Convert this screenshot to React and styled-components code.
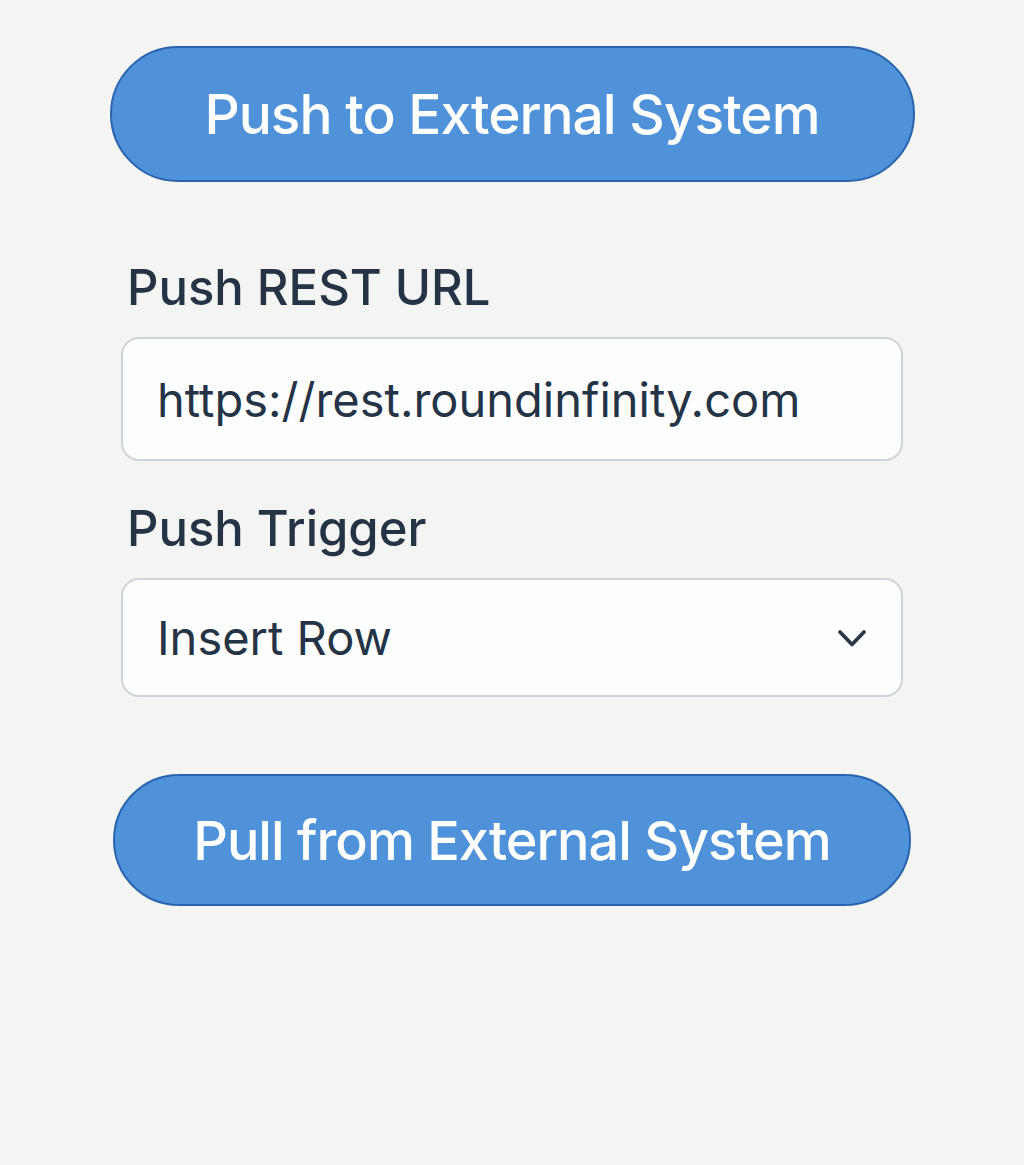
import React from 'react'
import styled, { createGlobalStyle } from 'styled-components'

const Global = createGlobalStyle`
  html, body {
    margin: 0;
    padding: 0;
    background: #f4f4f3;
  }
  body {
    font-family: Inter, "Noto Sans", sans-serif;
  }
`

const App = () => {
  return (
    <>
      <Global />
      <Page>
        <Panel>
          <PillButton $width={805}>Push to External System</PillButton>

          <Label $top={76}>Push REST URL</Label>
          <Field>https://rest.roundinfinity.com</Field>

          <Label $top={38}>Push Trigger</Label>
          <Select>
            <span>Insert Row</span>
            <Chevron viewBox="0 0 30 30">
              <path d="M3 9l12 12.5 12-12.5" />
            </Chevron>
          </Select>

          <PillButton $width={798} $top={77} $height={132} $size={54}>
            Pull from External System
          </PillButton>
        </Panel>
      </Page>
    </>
  )
}

export default App

const Page = styled.div`
  width: 100%;
  min-height: 1165px;
  display: flex;
  justify-content: center;
  padding-top: 46px;
  box-sizing: border-box;
`
const Panel = styled.div`
  width: 782px;
  display: flex;
  flex-direction: column;
  align-items: center;
`
const PillButton = styled.button`
  width: ${p => p.$width}px;
  height: ${p => p.$height || 136}px;
  margin-top: ${p => p.$top || 0}px;
  border-radius: 70px;
  border: 2px solid #2a63ae;
  background: #4f92da;
  color: #ffffff;
  font-family: Inter, "Noto Sans", sans-serif;
  font-size: ${p => p.$size || 55}px;
  font-weight: 500;
  letter-spacing: -1px;
  cursor: pointer;
  flex-shrink: 0;
`
const Label = styled.div`
  align-self: stretch;
  margin-top: ${p => p.$top}px;
  margin-bottom: 19px;
  padding-left: 6px;
  color: #243446;
  font-size: 49px;
  font-weight: 500;
  line-height: 60px;
`
const Field = styled.div`
  align-self: stretch;
  height: 124px;
  box-sizing: border-box;
  display: flex;
  align-items: center;
  padding: 0 34px;
  background: #fdfdfd;
  border: 2px solid #cfd4d9;
  border-radius: 18px;
  color: #243446;
  font-size: 47px;
`
const Select = styled(Field)`
  height: 119px;
  justify-content: space-between;
  padding-right: 34px;
`
const Chevron = styled.svg`
  width: 30px;
  height: 30px;
  fill: none;
  stroke: #2b3a4a;
  stroke-width: 3.8;
  stroke-linecap: round;
  stroke-linejoin: round;
`
